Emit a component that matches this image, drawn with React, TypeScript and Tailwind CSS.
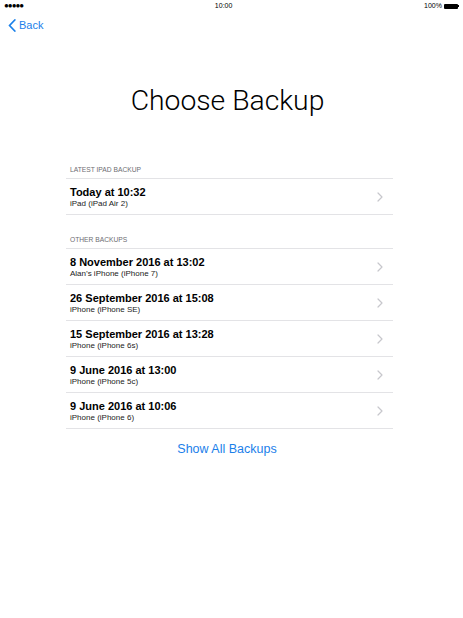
import React from "react";

type Backup = { date: string; device: string };

const latest: Backup[] = [{ date: "Today at 10:32", device: "iPad (iPad Air 2)" }];

const others: Backup[] = [
  { date: "8 November 2016 at 13:02", device: "Alan’s iPhone (iPhone 7)" },
  { date: "26 September 2016 at 15:08", device: "iPhone (iPhone SE)" },
  { date: "15 September 2016 at 13:28", device: "iPhone (iPhone 6s)" },
  { date: "9 June 2016 at 13:00", device: "iPhone (iPhone 5c)" },
  { date: "9 June 2016 at 10:06", device: "iPhone (iPhone 6)" },
];

function Chevron() {
  return (
    <svg width="6" height="10" viewBox="0 0 6 10" fill="none" className="mr-[10px]">
      <path d="M1 1l4 4-4 4" stroke="#c7c7cc" strokeWidth="1.2" strokeLinecap="round" strokeLinejoin="round" />
    </svg>
  );
}

function Row({ item }: { item: Backup }) {
  return (
    <div className="flex h-9 items-center justify-between border-b border-[#e3e3e6] pl-[4px]">
      <div className="flex flex-col">
        <span className="text-[11px] font-bold leading-[14px] text-black">{item.date}</span>
        <span className="text-[8px] leading-[10px] text-[#222]">{item.device}</span>
      </div>
      <Chevron />
    </div>
  );
}

function SectionHeader({ title }: { title: string }) {
  return (
    <div className="border-b border-[#e3e3e6] pb-[3px] pl-[4px] text-[6.7px] leading-[10px] text-[#6d6d72]">
      {title}
    </div>
  );
}

export default function App() {
  return (
    <div className="relative h-[618px] w-[463px] bg-white" style={{ fontFamily: "'Liberation Sans', Arial, sans-serif" }}>
      {/* status bar */}
      <div className="flex h-3 items-center justify-between px-[4px] text-[7px] text-black">
        <span className="text-[8px] leading-none tracking-[-1px]">●●●●●</span>
        <span>10:00</span>
        <div className="flex items-center gap-[2px]">
          <span>100%</span>
          <div className="flex items-center">
            <div className="h-[5px] w-[14px] rounded-[1px] bg-black" />
            <div className="h-[2px] w-[1px] bg-black" />
          </div>
        </div>
      </div>

      {/* nav */}
      <div className="flex h-[26px] items-center pl-[8px] text-[11px] text-[#1b80ea]">
        <svg width="8" height="13" viewBox="0 0 8 13" fill="none">
          <path d="M6.8 1L1.5 6.5l5.3 5.5" stroke="#1b80ea" strokeWidth="1.8" strokeLinecap="round" strokeLinejoin="round" />
        </svg>
        <span className="ml-[3px]">Back</span>
      </div>

      {/* title */}
      <h1
        className="mt-[45px] h-9 pr-[8px] text-center text-[28.3px] font-light leading-9 text-black"
        style={{ fontFamily: "Roboto, sans-serif" }}
      >
        Choose Backup
      </h1>

      <div className="ml-[66px] mt-[46px] w-[327px]">
        <SectionHeader title="LATEST IPAD BACKUP" />
        {latest.map((b) => (
          <Row key={b.date} item={b} />
        ))}

        <div className="h-[20px]" />
        <SectionHeader title="OTHER BACKUPS" />
        {others.map((b) => (
          <Row key={b.date} item={b} />
        ))}

        <div className="mt-[12px] pr-[5px] text-center text-[12.5px] leading-4 text-[#1b80ea]">Show All Backups</div>
      </div>
    </div>
  );
}
